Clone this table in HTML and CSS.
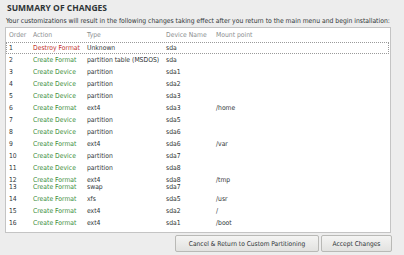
FILE: index.html
```html
<!DOCTYPE html>
<html>
<head>
<meta charset="utf-8">
<link rel="stylesheet" href="styles.css">
</head>
<body>
<div class="page">
  <div class="title">SUMMARY OF CHANGES</div>
  <div class="subtitle">Your customizations will result in the following changes taking effect after you return to the main menu and begin installation:</div>
  <div class="list">
    <div class="row head"><span>Order</span><span>Action</span><span>Type</span><span>Device Name</span><span>Mount point</span></div>
    <div class="row selected"><span>1</span><span class="destroy">Destroy Format</span><span>Unknown</span><span>sda</span><span></span></div>
    <div class="row"><span>2</span><span class="create">Create Format</span><span>partition table (MSDOS)</span><span>sda</span><span></span></div>
    <div class="row"><span>3</span><span class="create">Create Device</span><span>partition</span><span>sda1</span><span></span></div>
    <div class="row"><span>4</span><span class="create">Create Device</span><span>partition</span><span>sda2</span><span></span></div>
    <div class="row"><span>5</span><span class="create">Create Device</span><span>partition</span><span>sda3</span><span></span></div>
    <div class="row"><span>6</span><span class="create">Create Format</span><span>ext4</span><span>sda3</span><span>/home</span></div>
    <div class="row"><span>7</span><span class="create">Create Device</span><span>partition</span><span>sda5</span><span></span></div>
    <div class="row"><span>8</span><span class="create">Create Device</span><span>partition</span><span>sda6</span><span></span></div>
    <div class="row"><span>9</span><span class="create">Create Format</span><span>ext4</span><span>sda6</span><span>/var</span></div>
    <div class="row"><span>10</span><span class="create">Create Device</span><span>partition</span><span>sda7</span><span></span></div>
    <div class="row"><span>11</span><span class="create">Create Device</span><span>partition</span><span>sda8</span><span></span></div>
    <div class="row squeezed"><span>12</span><span class="create">Create Format</span><span>ext4</span><span>sda8</span><span>/tmp</span></div>
    <div class="row"><span>13</span><span class="create">Create Format</span><span>swap</span><span>sda7</span><span></span></div>
    <div class="row"><span>14</span><span class="create">Create Format</span><span>xfs</span><span>sda5</span><span>/usr</span></div>
    <div class="row"><span>15</span><span class="create">Create Format</span><span>ext4</span><span>sda2</span><span>/</span></div>
    <div class="row"><span>16</span><span class="create">Create Format</span><span>ext4</span><span>sda1</span><span>/boot</span></div>
  </div>
  <div class="buttons">
    <button class="btn cancel">Cancel &amp; Return to Custom Partitioning</button>
    <button class="btn accept">Accept Changes</button>
  </div>
</div>
</body>
</html>
```
FILE: styles.css
```css
html, body {
  margin: 0;
  padding: 0;
  background: #ededed;
}
body {
  width: 404px;
  height: 255px;
  overflow: hidden;
  font-family: "DejaVu Sans Condensed", "DejaVu Sans", sans-serif;
  font-size: 6.75px;
  color: #2e3436;
}
.page {
  padding: 3px 12px 0 5px;
}
.title {
  font-family: "Open Sans", "DejaVu Sans", sans-serif;
  font-size: 8.5px;
  font-weight: bold;
  line-height: 10px;
  padding-left: 2px;
  color: #2e3436;
}
.subtitle {
  line-height: 10px;
  margin-top: 3px;
  padding-left: 1px;
  white-space: nowrap;
}
.list {
  margin-top: 1px;
  margin-right: 1px;
  height: 206px;
  box-sizing: border-box;
  border: 1px solid #c4c4c4;
  background: #ffffff;
}
.row {
  display: grid;
  grid-template-columns: 24px 54px 79px 50px 1fr;
  height: 12px;
  line-height: 12px;
  white-space: nowrap;
}
.row span {
  padding-left: 3px;
}
.row.head {
  height: 14px;
  line-height: 14px;
  color: #8b8e8f;
}
.row.selected {
  box-sizing: border-box;
  border: 1px dotted #9a9a9a;
  line-height: 10px;
  margin-right: 1px;
}
.row.selected span {
  padding-left: 2px;
}
.row.squeezed {
  height: 7px;
  overflow: visible;
}
.destroy {
  color: #c4302b;
}
.create {
  color: #3b8e3b;
}
.buttons {
  display: flex;
  justify-content: flex-end;
  gap: 2px;
  margin-top: 2px;
}
.btn {
  height: 17px;
  padding: 0;
  font-family: "DejaVu Sans Condensed", "DejaVu Sans", sans-serif;
  font-size: 6.6px;
  color: #2e3436;
  background: linear-gradient(#f4f4f3, #e2e2e0);
  border: 1px solid #b9b9b6;
  border-radius: 2px;
}
.btn.cancel {
  width: 144px;
}
.btn.accept {
  width: 71px;
}
```
